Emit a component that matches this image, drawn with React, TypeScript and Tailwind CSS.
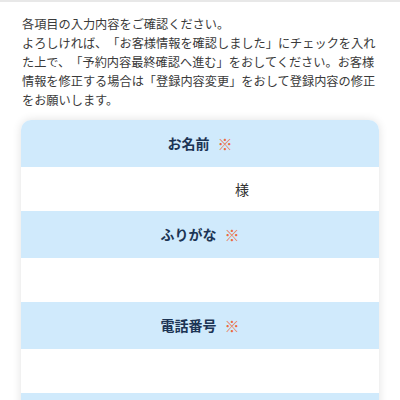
const FIELDS = [
  { label: 'お名前', value: '様' },
  { label: 'ふりがな', value: '' },
  { label: '電話番号', value: '' },
];

function FieldRow({ label, value }: { label: string; value: string }) {
  return (
    <div>
      <div className="h-[47px] bg-[#d0eafc] flex items-center justify-center gap-[8px]">
        <span className="text-[14px] font-bold text-[#1c3454]">{label}</span>
        <span className="text-[15px] leading-none font-light text-[#ec6a3c]">※</span>
      </div>
      <div className="h-[44px] bg-white flex items-center justify-center">
        {value && (
          <>
            <span className="inline-block w-[84px]" />
            <span className="text-[14px] text-[#333]">{value}</span>
          </>
        )}
      </div>
    </div>
  );
}

export default function App() {
  return (
    <div
      className="w-[400px] h-[400px] overflow-hidden bg-white border-t-2 border-[#e8e8e8] [text-spacing-trim:space-all]"
      style={{ fontFamily: '"Noto Sans CJK JP", "Noto Sans", sans-serif' }}
    >
      <p className="mx-[22px] w-[356px] pt-[13px] text-[12.2px] leading-[19px] text-[#3a3a3a]">
        各項目の入力内容をご確認ください。
        <br />
        よろしければ、「お客様情報を確認しました」にチェックを入れた上で、「予約内容最終確認へ進む」をおしてください。お客様情報を修正する場合は「登録内容変更」をおして登録内容の修正をお願いします。
      </p>

      <div className="mx-[21px] mt-[10px] rounded-[10px] overflow-hidden shadow-[0_0_10px_rgba(0,0,0,0.12)]">
        {FIELDS.map((f) => (
          <FieldRow key={f.label} label={f.label} value={f.value} />
        ))}
        {/* next field header, cut off by the viewport */}
        <div className="h-[47px] bg-[#d0eafc]" />
      </div>
    </div>
  );
}
